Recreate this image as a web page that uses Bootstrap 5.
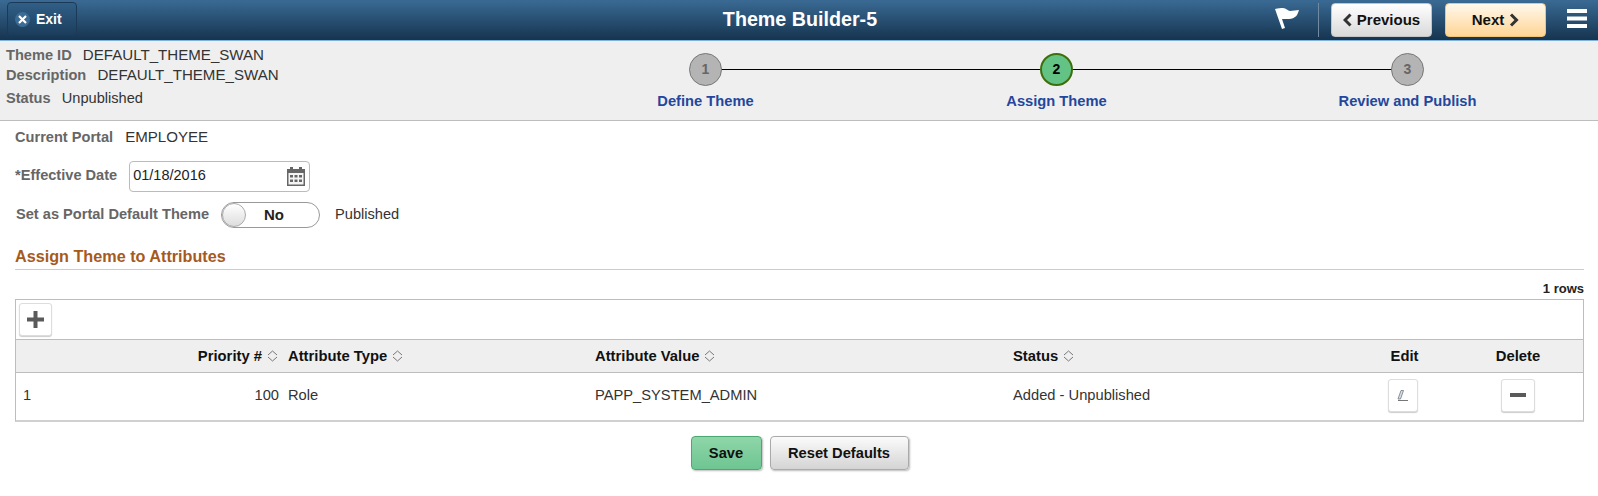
<!DOCTYPE html>
<html lang="en">
<head>
<meta charset="utf-8">
<title>Theme Builder-5</title>
<link href="https://cdn.jsdelivr.net/npm/bootstrap@5.3.0/dist/css/bootstrap.min.css" rel="stylesheet">
<style>
html,body{height:496px;overflow:hidden}
body{font-family:"Liberation Sans",Arial,sans-serif;font-size:15px;color:#333;background:#fff}
.pt-banner{height:41px;padding:0 11px 0 7px;background:linear-gradient(#3a6a94,#16344f);border-bottom:1px solid #7fb2dc;color:#fff}
.pt-side-l{width:399px}
.pt-side-r{width:393px}
.pt-title{font-size:19.7px;font-weight:700}
.pt-exit{height:34px;width:70px;margin-top:-3px;border:1px solid #1c3a56;border-radius:4px;background:linear-gradient(#315f87,#1b3d5c);font-size:14px;font-weight:700;color:#fff;gap:6px;padding:2px 0 0 7px}
.pt-x{width:15px;height:15px;border-radius:50%;background:#3a6c96;flex:none}
.pt-flag{margin-top:-2px;flex:none}
.pt-divider{width:1px;height:34px;background:#6f8aa2;margin:0 12px 0 18px;flex:none}
.pt-nav{width:101px;height:34px;margin-top:-1px;border-radius:4px;font-size:15px;font-weight:700;color:#111;gap:5px;padding:1px 0 0;flex:none}
.pt-prev{background:linear-gradient(#fff,#d9d9d9);border:1px solid #c4c4c4}
.pt-next{background:linear-gradient(#fff8ec,#ffd595);border:1px solid #f0c477;margin-left:13px;margin-right:21px}
.pt-menu{width:20px;height:19px;flex:none;margin-top:-3px}
.pt-band{height:80px;background:#efefef;border-bottom:1px solid #bdbdbd;padding:0 0 0 6px}
.pt-summary{width:524px;padding-top:4px;line-height:20px}
.pt-summary div:last-child{margin-top:3px}
.pt-lbl{font-weight:700;font-size:14.6px;color:#666;margin-right:7px}
.pt-val{color:#333;font-size:14.6px}
.pt-caps{color:#333;font-size:15.1px}
.pt-steps{width:1053px;margin-top:12px}
.pt-step{width:351px;position:relative}
.pt-step:not(:last-child)::after{content:"";position:absolute;left:175px;width:351px;top:16px;border-top:1px solid #000}
.pt-num{position:relative;z-index:1;width:33px;height:33px;border-radius:50%;background:#b4b4b4;border:1px solid #777;color:#666;font-weight:700;font-size:14px}
.pt-num-on{background:#62c384;border:2px solid #3f6d0b;color:#000}
.pt-stepname{margin-top:6px;color:#23479c;font-weight:700;font-size:14.7px;line-height:18px}
.pt-body{padding:0 14px 0 15px}
.pt-row1{height:33px}
.pt-row2{height:44px;gap:12px}
.pt-row3{height:34px;padding-left:1px}
.pt-cal{width:181px;height:31px;border:1px solid #bbb;border-radius:4px;padding:0 3px;background:#fff;color:#222;font-size:14.5px}
.pt-toggle{width:99px;height:26px;border:1px solid #999;border-radius:13px;margin:0 15px 0 12px;padding-left:7px;background:#fff;position:relative;font-weight:700;color:#222}
.pt-knob{position:absolute;left:0;top:0;width:24px;height:24px;border-radius:50%;border:1px solid #aaa;background:linear-gradient(#fff,#ddd)}
.pt-heading{height:38px;padding-top:10px;border-bottom:1px solid #ccc;color:#a65a1e;font-weight:700;font-size:16.2px;line-height:29px;margin:0}
.pt-rows{height:29px;padding-top:9px;font-size:13px;line-height:20px;font-weight:700;color:#222}
.pt-grid{border:1px solid #bdbdbd;border-bottom-width:2px;border-bottom-color:#d0d0d0}
.pt-tool{height:40px;padding:3px;border-bottom:1px solid #bdbdbd}
.pt-icon{background:#fff;border:1px solid #ddd;border-radius:3px;box-shadow:0 1px 1px #ccc;padding:0}
.pt-add{width:33px;height:33px}
.pt-tbl{table-layout:fixed;margin:0;width:100%;--bs-table-border-color:#bdbdbd}
.pt-tbl th{height:32px;padding:0 5px;background:#efefef;color:#111;font-size:14.8px;vertical-align:middle;border-bottom:1px solid #bdbdbd;white-space:nowrap}
.pt-tbl td{height:48px;padding:0 5px 2px;vertical-align:middle;color:#333;border:0;background:#fff;white-space:nowrap;font-size:14.7px}
.pt-sort{margin-left:5px;vertical-align:-1px}
.pt-edit{width:30px;height:33px}
.pt-del{width:34px;height:33px}
.pt-foot{margin-top:14px;gap:8px}
.pt-save,.pt-reset{height:34px;border-radius:4px;font-weight:700;font-size:14.7px;color:#111;padding:0;box-shadow:1px 1px 2px #bbb}
.pt-save{width:71px;background:linear-gradient(#8fd6a8,#6ec592);border:1px solid #4aa873}
.pt-reset{width:139px;background:linear-gradient(#fbfbfb,#d4d4d4);border:1px solid #aaa}
</style>
</head>
<body>
<header class="pt-banner d-flex align-items-center justify-content-between">
  <div class="pt-side-l d-flex">
    <button class="btn pt-exit d-flex align-items-center" type="button">
      <span class="pt-x d-flex align-items-center justify-content-center"><svg width="9" height="9" viewBox="0 0 9 9"><path d="M1 1l7 7M8 1L1 8" stroke="#fff" stroke-width="2.200"/></svg></span>Exit
    </button>
  </div>
  <div class="pt-title">Theme Builder-5</div>
  <div class="pt-side-r d-flex align-items-center justify-content-end">
    <svg class="pt-flag" width="25" height="22" viewBox="0 0 25 22"><path d="M0 1C3 0 6 0 8 0c3 0 5 3 7 3 3 0 6-1 9-1-1 3-2 6-4 7-3 2-5 2-8 2-2 0-3 0-5 0l3 9-3 1z" fill="#fff"/></svg>
    <span class="pt-divider"></span>
    <button class="btn pt-nav pt-prev d-flex align-items-center justify-content-center" type="button"><svg width="9" height="14" viewBox="0 0 9 14"><path d="M7.500 1.500L2 7l5.500 5.500" fill="none" stroke="#333" stroke-width="3"/></svg>Previous</button>
    <button class="btn pt-nav pt-next d-flex align-items-center justify-content-center" type="button">Next<svg width="10" height="14" viewBox="0 0 10 14"><path d="M2 1.500L7.500 7 2 12.500" fill="none" stroke="#333" stroke-width="3"/></svg></button>
    <svg class="pt-menu" viewBox="0 0 20 19"><path d="M0 0h20v4H0zM0 7.500h20v4H0zM0 15h20v4H0z" fill="#fff"/></svg>
  </div>
</header>

<section class="pt-band d-flex">
  <div class="pt-summary">
    <div><span class="pt-lbl">Theme ID</span> <span class="pt-caps">DEFAULT_THEME_SWAN</span></div>
    <div><span class="pt-lbl">Description</span> <span class="pt-caps">DEFAULT_THEME_SWAN</span></div>
    <div><span class="pt-lbl">Status</span> <span class="pt-val">Unpublished</span></div>
  </div>
  <div class="pt-steps d-flex">
    <div class="pt-step d-flex flex-column align-items-center"><span class="pt-num d-flex align-items-center justify-content-center">1</span><span class="pt-stepname">Define Theme</span></div>
    <div class="pt-step d-flex flex-column align-items-center"><span class="pt-num pt-num-on d-flex align-items-center justify-content-center">2</span><span class="pt-stepname">Assign Theme</span></div>
    <div class="pt-step d-flex flex-column align-items-center"><span class="pt-num d-flex align-items-center justify-content-center">3</span><span class="pt-stepname">Review and Publish</span></div>
  </div>
</section>

<main class="pt-body">
  <div class="pt-row1 d-flex align-items-center"><span class="pt-lbl me-2">Current Portal</span><span class="pt-caps ms-1">EMPLOYEE</span></div>
  <div class="pt-row2 d-flex align-items-center">
    <span class="pt-lbl m-0">*Effective Date</span>
    <div class="pt-cal d-flex align-items-center justify-content-between">01/18/2016
      <svg width="20" height="20" viewBox="0 0 20 20"><path d="M1 3h3V1h3v2h6V1h3v2h3v17H1z" fill="#666"/><path d="M2.500 7h15v11.500h-15z" fill="#f4f4f4"/><path d="M4 9h3v2.500H4zM8.500 9h3v2.500h-3zM13 9h3v2.500h-3zM4 13.500h3V16H4zM8.500 13.500h3V16h-3zM13 13.500h3V16h-3z" fill="#666"/></svg>
    </div>
  </div>
  <div class="pt-row3 d-flex align-items-center">
    <span class="pt-lbl m-0">Set as Portal Default Theme</span>
    <div class="pt-toggle d-flex align-items-center justify-content-center"><span class="pt-knob"></span>No</div>
    <span class="pt-val">Published</span>
  </div>
  <h2 class="pt-heading">Assign Theme to Attributes</h2>
  <div class="pt-rows text-end">1 rows</div>
  <div class="pt-grid">
    <div class="pt-tool"><button class="btn pt-icon pt-add d-flex align-items-center justify-content-center" type="button" aria-label="Add"><svg width="17" height="17" viewBox="0 0 17 17"><path d="M6.500 0h4v6.500H17v4h-6.500V17h-4v-6.500H0v-4h6.500z" fill="#5a5a5a"/></svg></button></div>
    <table class="table pt-tbl">
      <colgroup><col style="width:158px"><col style="width:109px"><col style="width:307px"><col style="width:418px"><col style="width:348px"><col style="width:97px"><col></colgroup>
      <thead>
        <tr>
          <th></th>
          <th class="text-end">Priority #<svg class="pt-sort" width="11" height="12" viewBox="0 0 11 12"><path d="M1 5l4.500-4L10 5M1 7l4.500 4L10 7" fill="none" stroke="#777"/></svg></th>
          <th>Attribute Type<svg class="pt-sort" width="11" height="12" viewBox="0 0 11 12"><path d="M1 5l4.500-4L10 5M1 7l4.500 4L10 7" fill="none" stroke="#777"/></svg></th>
          <th>Attribute Value<svg class="pt-sort" width="11" height="12" viewBox="0 0 11 12"><path d="M1 5l4.500-4L10 5M1 7l4.500 4L10 7" fill="none" stroke="#777"/></svg></th>
          <th>Status<svg class="pt-sort" width="11" height="12" viewBox="0 0 11 12"><path d="M1 5l4.500-4L10 5M1 7l4.500 4L10 7" fill="none" stroke="#777"/></svg></th>
          <th class="text-center">Edit</th>
          <th class="text-center">Delete</th>
        </tr>
      </thead>
      <tbody>
        <tr>
          <td style="padding-left:7px">1</td>
          <td class="text-end pe-1">100</td>
          <td>Role</td>
          <td>PAPP_SYSTEM_ADMIN</td>
          <td>Added - Unpublished</td>
          <td class="text-center"><button class="btn pt-icon pt-edit me-1" type="button" aria-label="Edit"><svg width="14" height="14" viewBox="0 0 14 14"><path d="M5 1.500h2.500L4.500 10H2z" fill="#cfe0f5" stroke="#777" stroke-width=".8"/><path d="M2 11.500h10" stroke="#777"/></svg></button></td>
          <td class="text-center"><button class="btn pt-icon pt-del" type="button" aria-label="Delete"><svg width="16" height="4" viewBox="0 0 16 4" class="d-block mx-auto"><path d="M0 0h16v4H0z" fill="#5a5a5a"/></svg></button></td>
        </tr>
      </tbody>
    </table>
  </div>
  <div class="pt-foot d-flex justify-content-center">
    <button class="btn pt-save" type="button">Save</button>
    <button class="btn pt-reset" type="button">Reset Defaults</button>
  </div>
</main>
<script src="https://cdn.jsdelivr.net/npm/bootstrap@5.3.0/dist/js/bootstrap.bundle.min.js"></script>
</body>
</html>
